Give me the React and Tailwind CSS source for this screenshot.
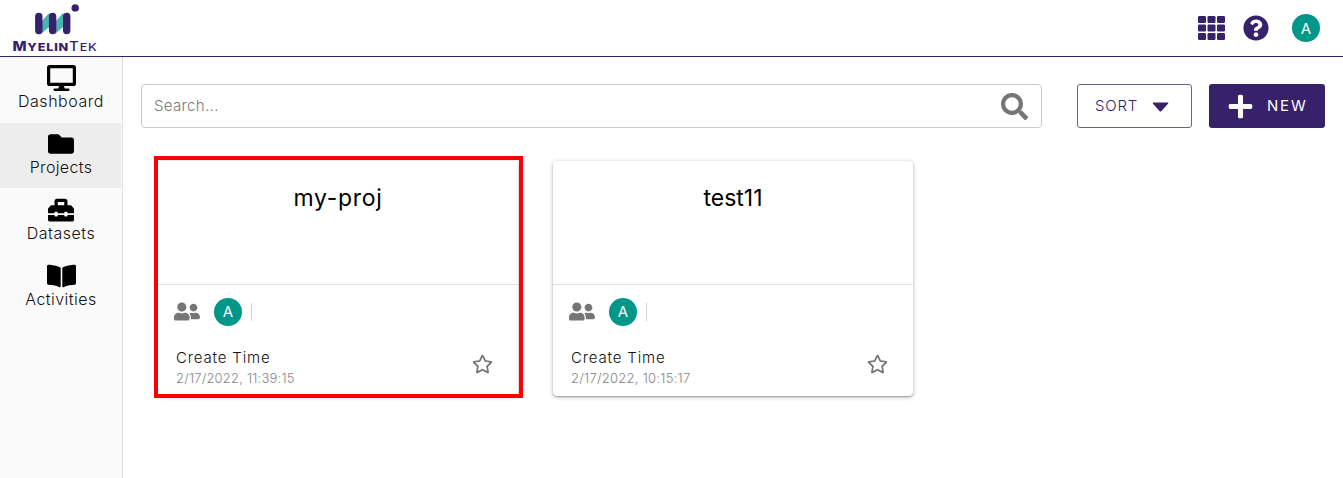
import React from "react";
import { FaDesktop, FaFolder, FaBookOpen, FaQuestionCircle, FaUserFriends, FaSearch, FaPlus, FaRegStar, FaToolbox } from "react-icons/fa";

function Logo() {
  return (
    <svg className="mt-[3px] block shrink-0" width="48" height="33" viewBox="31 3 48 33">
      <path d="M38 25.500 48.500 13.500 56 16v5L41 34zM52 25.500 62.500 13.500 70 16v5L55 34z" fill="#4ab5b0" />
      <path d="M38.800 16.500v14M52.600 16.500v14M66.700 16.500v14" stroke="#37216a" strokeWidth="7.400" strokeLinecap="round" />
      <circle cx="75.200" cy="7.900" r="3.700" fill="#37216a" />
    </svg>
  );
}

function NavItem({ icon, label, textClass, active }) {
  return (
    <div className={active ? "mr-px mb-px flex h-[65px] flex-col items-center bg-[#ededed]" : "flex h-[66px] flex-col items-center"}>
      <div className="mt-[8px] flex h-[26px] items-center text-black">{icon}</div>
      <span className={"text-[16px] leading-5 font-light whitespace-nowrap text-[#111] " + textClass}>{label}</span>
    </div>
  );
}

function Avatar() {
  return (
    <span className="flex size-7 shrink-0 items-center justify-center rounded-full bg-[#009688] text-[15px] leading-none text-white">A</span>
  );
}

function ProjectCard({ name, date, nameClass, dateClass, highlighted }) {
  return (
    <article className="relative flex h-[235px] w-[360px] flex-col rounded-[4px] bg-white shadow-[0_1px_4px_rgba(0,0,0,0.3),0_1px_1px_rgba(0,0,0,0.2)]">
      <div className="flex h-[124px] justify-center border-b border-[#e2e2e2] pt-[21px]">
        <h2 className={"text-[23px] leading-[33px] font-normal text-black " + nameClass}>{name}</h2>
      </div>
      <div className="flex h-[53px] items-center pl-4">
        <FaUserFriends className="h-[21px] w-[26px] text-[#757575]" />
        <div className="ml-[14px]"><Avatar /></div>
        <span className="ml-[9px] h-[18px] w-px bg-[#d2d2d2]" />
      </div>
      <div className="flex justify-between pt-[9px] pr-[25px] pl-[18px]">
        <div className="flex flex-col">
          <span className="text-[15px] leading-[21px] font-light tracking-[0.85px] text-[#111]">Create Time</span>
          <span className={"text-[13px] leading-[21px] font-light text-[#858585] " + dateClass}>{date}</span>
        </div>
        <FaRegStar className="mt-[7px] h-[20px] w-[21px] text-[#757575]" />
      </div>
      {highlighted && <div className="absolute -top-[5px] -left-[4px] h-[242px] w-[369px] border-4 border-[#f00]" />}
    </article>
  );
}

export default function App() {
  return (
    <div className="flex h-[478px] w-[1343px] flex-col overflow-hidden bg-white font-[Inter,sans-serif]">
      <header className="flex h-[57px] shrink-0 items-start justify-between border-b border-[#37216a]">
        <div className="flex w-[110px] flex-col items-center">
          <Logo />
          <div className="mt-[2px] flex h-[16px] scale-x-[1.15] items-baseline text-[13px] leading-[16px] tracking-[0.7px] text-[#37216a]">
            <span className="font-extrabold">M<span className="text-[11px]">YELIN</span></span>
            <span className="font-medium">T<span className="text-[11px]">EK</span></span>
          </div>
        </div>
        <div className="flex h-[56px] items-center pr-[23px]">
          <svg width="27" height="24" viewBox="0 0 27 24" fill="#37216a">
            {[0, 8.5, 17].flatMap((y) => [0, 9.5, 19].map((x) => <rect key={x + "-" + y} x={x} y={y} width="8" height="7" rx="1.2" />))}
          </svg>
          <FaQuestionCircle className="mr-[23px] ml-[18px] size-[26px] text-[#37216a]" />
          <Avatar />
        </div>
      </header>
      <div className="flex flex-1">
        <nav className="w-[123px] shrink-0 border-r border-[#dfdfdf] bg-[#fafafa]">
          <NavItem icon={<FaDesktop className="h-[26px] w-[29px]" />} label="Dashboard" textClass="tracking-[0.55px]" />
          <NavItem icon={<FaFolder className="size-[26px]" />} label="Projects" textClass="pl-px tracking-[0.35px]" active />
          <NavItem icon={<FaToolbox className="size-[26px]" />} label="Datasets" textClass="tracking-[0.5px]" />
          <NavItem icon={<FaBookOpen className="h-[26px] w-[29px]" />} label="Activities" textClass="tracking-[0.45px]" />
        </nav>
        <main className="flex-1 pt-[27px] pl-[18px]">
          <div className="flex">
            <div className="flex h-[44px] w-[901px] items-center justify-between rounded-[4px] border border-[#c9c9c9] pr-[13px] pl-3">
              <span className="pt-px text-[15px] font-light tracking-[0.35px] text-[#777]">Search...</span>
              <FaSearch className="size-[27px] text-[#757575]" />
            </div>
            <button className="ml-[35px] flex h-[44px] w-[115px] items-center rounded-[3px] border border-[#735d9c] pl-[17px] text-[#37216a]">
              <span className="pt-px text-[15px] font-light tracking-[0.8px]">SORT</span>
              <svg className="mt-[2px] ml-[14px]" width="17" height="10" viewBox="0 0 17 10"><path d="M1.500.5h14q1.500 0 .5 1.300L9.500 9q-1 1-2 0L1 1.800Q0 .5 1.500.5" fill="#37216a" /></svg>
            </button>
            <button className="ml-[17px] flex h-[44px] w-[116px] items-center rounded-[3px] bg-[#37216a] pl-[18px] text-white">
              <FaPlus className="size-[27px]" />
              <span className="ml-[13px] pt-px text-[15px] tracking-[1.8px]">NEW</span>
            </button>
          </div>
          <div className="mt-[33px] flex gap-[35px] pl-[17px]">
            <ProjectCard name="my-proj" date="2/17/2022, 11:39:15" nameClass="tracking-[0.7px]" dateClass="tracking-[0.2px]" highlighted />
            <ProjectCard name="test11" date="2/17/2022, 10:15:17" nameClass="tracking-[0]" dateClass="tracking-[0.27px]" />
          </div>
        </main>
      </div>
    </div>
  );
}
